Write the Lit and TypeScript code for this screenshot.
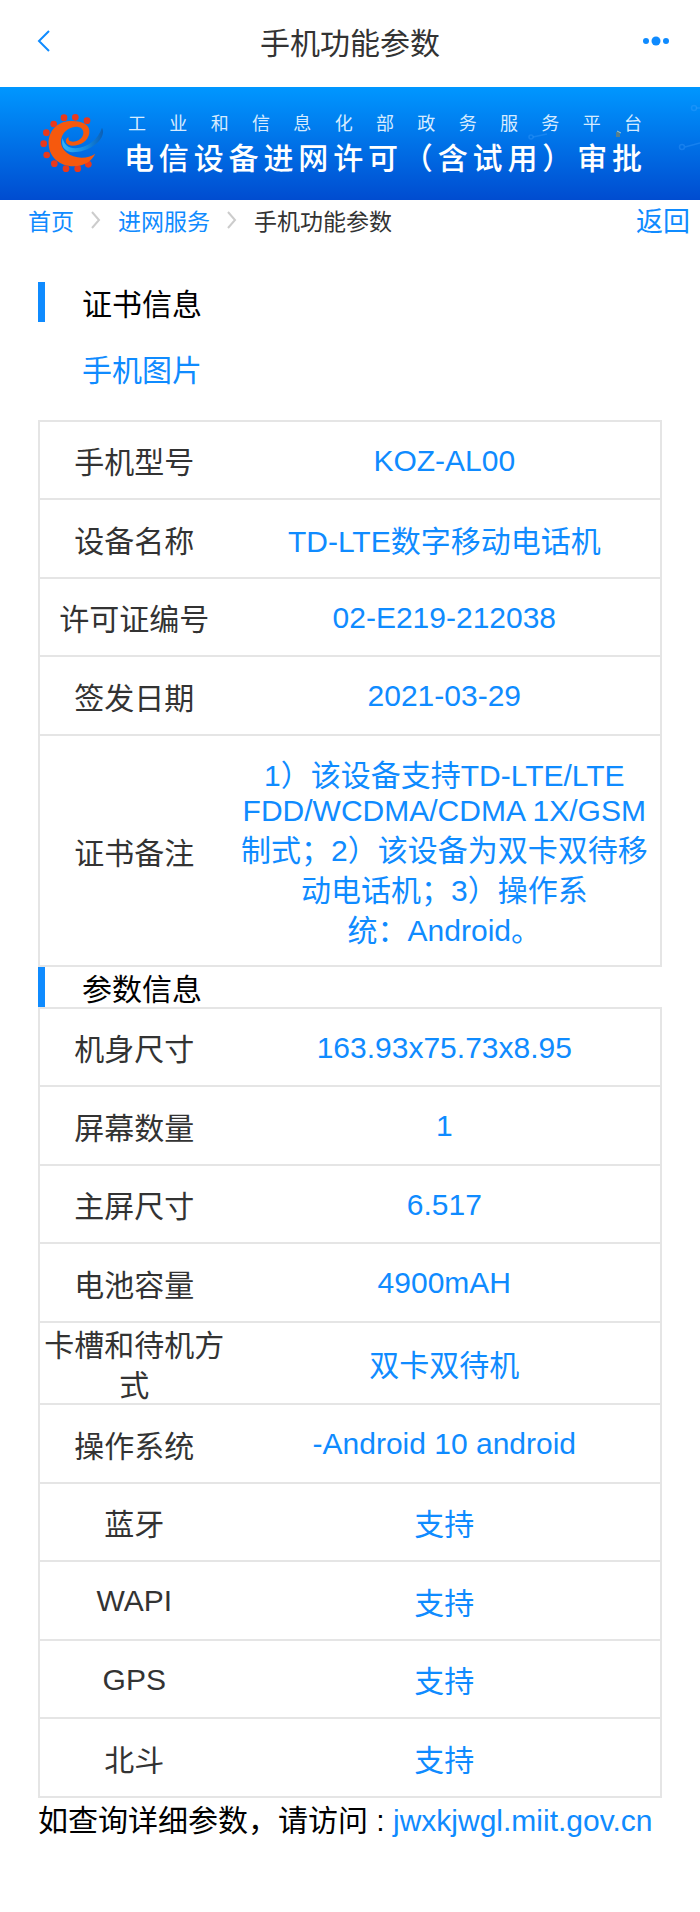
import { LitElement, html, css, svg } from "lit";
import { customElement, property } from "lit/decorators.js";

type Row = [label: string, value: string];

const CERTIFICATE: Row[] = [
  ["手机型号", "KOZ-AL00"],
  ["设备名称", "TD-LTE数字移动电话机"],
  ["许可证编号", "02-E219-212038"],
  ["签发日期", "2021-03-29"],
  [
    "证书备注",
    "1）该设备支持TD-LTE/LTE FDD/WCDMA/CDMA 1X/GSM制式；2）该设备为双卡双待移动电话机；3）操作系\n统：Android。",
  ],
];

const PARAMETERS: Row[] = [
  ["机身尺寸", "163.93x75.73x8.95"],
  ["屏幕数量", "1"],
  ["主屏尺寸", "6.517"],
  ["电池容量", "4900mAH"],
  ["卡槽和待机方式", "双卡双待机"],
  ["操作系统", "-Android 10 android"],
  ["蓝牙", "支持"],
  ["WAPI", "支持"],
  ["GPS", "支持"],
  ["北斗", "支持"],
];

// Centres of the cog teeth around the emblem.
const TEETH = [
  [90, 38], [124, 37], [159, 47], [59, 57], [37, 83], [29, 116],
  [38, 150], [61, 176], [96, 191], [131, 191], [163, 178],
];

// Chinese runs get their own line metrics, so Latin-only lines stay tighter.
const mixed = (text: string) =>
  text
    .split(/([\u3000-\u9fff\uff00-\uffef]+)/)
    .filter((run) => run !== "")
    .map((run) =>
      /[\u3000-\u9fff\uff00-\uffef]/.test(run) ? html`<span class="zh">${run}</span>` : run
    );

const zh = css`
  .zh {
    font-family: "Noto Sans CJK SC", sans-serif;
    line-height: 40px;
  }
`;

@customElement("spec-table")
export class SpecTable extends LitElement {
  @property({ attribute: false }) rows: Row[] = [];
  @property() label = "";

  static styles = [
    zh,
    css`
      :host {
        display: block;
      }
      .table {
        width: 100%;
        table-layout: fixed;
        border-collapse: collapse;
        border: 2px solid #e5e5e5;
      }
      .row {
        height: 78px;
        border-bottom: 2px solid #e5e5e5;
      }
      .row:nth-child(even) {
        height: 79px;
      }
      .name,
      .value {
        font-weight: 400;
        text-align: center;
        vertical-align: middle;
        white-space: pre-line;
      }
      .name {
        width: 30%;
        padding: 0 1px;
        color: #333;
      }
      .value {
        padding: 0 8px;
        color: #0f8bff;
      }
      .long .value {
        padding-top: 17px;
        padding-bottom: 17px;
      }
    `,
  ];

  render() {
    return html`<table class="table" aria-label=${this.label}>
      <tbody>
        ${this.rows.map(
          ([name, value]) => html`<tr class="row ${value.length > 30 ? "long" : ""}">
            <th class="name" scope="row">${mixed(name)}</th><td class="value">${mixed(value)}</td>
          </tr>`
        )}
      </tbody>
    </table>`;
  }
}

@customElement("site-banner")
export class SiteBanner extends LitElement {
  static styles = css`
    :host {
      display: block;
    }
    .banner {
      position: relative;
      display: flex;
      align-items: center;
      gap: 20px;
      padding: 21px 58px 23px 40px;
      color: #fff;
      background: linear-gradient(#0097ff, #004cd0);
    }
    .logo {
      flex: none;
      width: 64px;
      height: 64px;
    }
    .texture {
      position: absolute;
      top: 0;
      right: 0;
      width: 200px;
      height: 100%;
    }
    .words {
      flex: 1;
      font-family: "Noto Sans CJK SC", sans-serif;
    }
    .platform,
    .service {
      margin: 0;
      text-align: justify;
      text-align-last: justify;
    }
    .platform {
      padding-left: 4px;
      font-size: 18px;
      line-height: 28px;
      color: #d6ebff;
    }
    .service {
      font-size: 30px;
      font-weight: 500;
      line-height: 41px;
    }
  `;

  render() {
    return html`<div class="banner">
      <svg class="texture" viewBox="0 0 200 113" preserveAspectRatio="xMaxYMid slice" aria-hidden="true">
        <g fill="none" stroke="#4aa4ff" stroke-opacity=".3" stroke-width="1.5">
          <circle cx="31" cy="50" r="2" /><path d="M33 50l14-3" />
          <circle cx="182" cy="60" r="2.5" /><path d="M185 60l15-4" />
          <circle cx="194" cy="21" r="2.5" /><path d="M196 21h4" />
        </g>
        <rect x="116" y="45" width="4" height="5" fill="#587f8c" />
        <path d="M117 44l4 2" stroke="#a5c9c8" />
      </svg>
      <svg class="logo" viewBox="18 18 192 192" role="img" aria-label="工业和信息化部">
        <defs>
          <linearGradient id="swoosh" x1="0" x2="1">
            <stop offset="0" stop-color="#35b4f6" />
            <stop offset=".6" stop-color="#1388e0" />
            <stop offset="1" stop-color="#0b5fb5" />
          </linearGradient>
        </defs>
        ${TEETH.map(([x, y]) => svg`<circle cx=${x} cy=${y} r="10" fill="#e8391c" />`)}
        <path
          d="M204 68C220 98 172 142 116 142C90 140 80 122 86 100C90 118 102 130 124 130C160 128 192 104 204 68Z"
          fill="url(#swoosh)"
        />
        <path
          d="M166 84C170 58 142 46 108 48C68 50 42 80 44 118C46 158 78 184 118 184C150 183 172 170 184 146C166 158 142 162 118 154C88 144 74 118 84 94C94 70 126 58 142 70C154 80 148 102 128 108C112 113 100 108 104 96C90 102 94 122 114 122C142 122 162 108 166 84Z"
          fill="#f6590d"
        />
      </svg>
      <div class="words">
        <p class="platform">工业和信息化部政务服务平台</p>
        <p class="service">电信设备进网许可（含试用）审批</p>
      </div>
    </div>`;
  }
}

@customElement("app-root")
export class AppRoot extends LitElement {
  static styles = [
    zh,
    css`
      :host {
        display: block;
        min-height: 100vh;
        background: #fff;
        color: #000;
        font-family: "Liberation Sans", "Noto Sans CJK SC", sans-serif;
        font-size: 30px;
        line-height: 35px;
      }
      a {
        color: #0f8bff;
        text-decoration: none;
      }
      .bar {
        display: flex;
        align-items: center;
        justify-content: space-between;
        padding: 21px 28px 26px;
      }
      .tool {
        display: flex;
        align-items: center;
        justify-content: center;
        width: 32px;
        height: 40px;
        padding: 0;
        border: 0;
        background: none;
        color: #0f8bff;
      }
      .title {
        margin: 0;
        font-size: 30px;
        font-weight: 400;
        color: #333;
      }
      .crumbs {
        display: flex;
        align-items: center;
        justify-content: space-between;
        padding: 0 10px 4px 28px;
      }
      .trail {
        display: flex;
        align-items: center;
        gap: 17px;
        margin: 0;
        padding: 0;
        list-style: none;
        font-size: 23px;
        color: #333;
      }
      .step {
        display: flex;
        align-items: center;
        gap: 17px;
      }
      .return {
        font-size: 27px;
      }
      .content {
        padding: 38px 38px 0;
      }
      .heading {
        margin: 0;
        padding-left: 37px;
        border-left: 7px solid #0f8bff;
        font-size: 30px;
        font-weight: 400;
      }
      .photo {
        margin: 0;
        padding: 26px 0 32px 44px;
      }
      .note {
        margin: 0;
      }
    `,
  ];

  render() {
    const sep = html`<svg width="10" height="18" viewBox="0 0 10 18" aria-hidden="true">
      <path d="M1 1l7 8-7 8" fill="none" stroke="#ccc" stroke-width="2" />
    </svg>`;
    return html`
      <header class="bar">
        <button class="tool" aria-label="后退">
          <svg width="14" height="22" viewBox="0 0 14 22" aria-hidden="true">
            <path d="M12 1L2 11l10 10" fill="none" stroke="currentColor" stroke-width="2" />
          </svg>
        </button>
        <h1 class="title">${mixed("手机功能参数")}</h1>
        <button class="tool" aria-label="更多">
          <svg width="28" height="10" viewBox="0 0 28 10" fill="currentColor" aria-hidden="true">
            <circle cx="4" cy="5" r="3" /><circle cx="14" cy="5" r="4.5" /><circle cx="24" cy="5" r="3" />
          </svg>
        </button>
      </header>
      <site-banner></site-banner>
      <nav class="crumbs" aria-label="位置">
        <ol class="trail">
          <li class="step"><a href="#home">${mixed("首页")}</a>${sep}</li>
          <li class="step"><a href="#service">${mixed("进网服务")}</a>${sep}</li>
          <li class="step" aria-current="page">${mixed("手机功能参数")}</li>
        </ol>
        <a class="return" href="#back">${mixed("返回")}</a>
      </nav>
      <main class="content">
        <h2 class="heading">${mixed("证书信息")}</h2>
        <p class="photo"><a href="#photo">${mixed("手机图片")}</a></p>
        <spec-table label="证书信息" .rows=${CERTIFICATE}></spec-table>
        <h2 class="heading">${mixed("参数信息")}</h2>
        <spec-table label="参数信息" .rows=${PARAMETERS}></spec-table>
        <p class="note">${mixed("如查询详细参数，请访问")} : <a href="#jwxkjwgl">jwxkjwgl.miit.gov.cn</a></p>
      </main>
    `;
  }
}
